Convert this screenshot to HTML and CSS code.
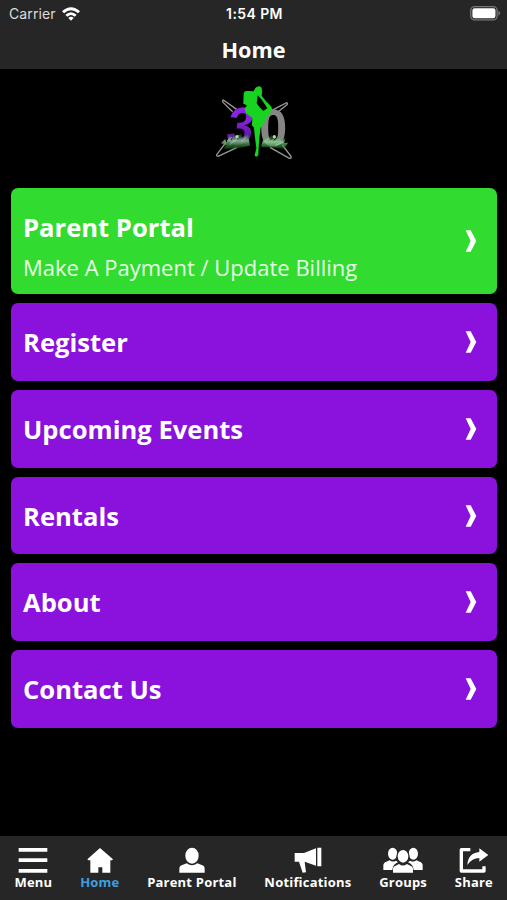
FILE: index.html
```
<!DOCTYPE html>
<html lang="en">
<head>
    <meta charset="UTF-8">
    <meta name="viewport" content="width=device-width, initial-scale=1.0">
    <title>Home</title>
    <link rel="stylesheet" href="styles.css">
</head>
<body>
    <header class="header">
        <div class="status-bar">
            <div class="carrier">
                <span>Carrier</span>
                <svg class="wifi" viewBox="0 0 54 42">
                    <path d="M0 13Q27 -11 54 13L48 19Q27 1 6 19Z"/>
                    <path d="M10 23Q27 8 44 23L38 29Q27 19 16 29Z"/>
                    <path d="M19 33Q27 26 35 33L27 41Z"/>
                </svg>
            </div>
            <span class="time">1:54 PM</span>
            <div class="power">
                <svg class="battery" viewBox="0 0 92 44">
                    <rect x="2" y="2" width="80" height="40" rx="12" fill="none" stroke="#777" stroke-width="4"/>
                    <rect x="7" y="7" width="70" height="30" rx="7" fill="#fff"/>
                    <path d="M86 15Q92 18 92 22T86 29Z" fill="#777"/>
                </svg>
            </div>
        </div>
        <h1 class="title">Home</h1>
    </header>

    <main class="content">
        <svg class="logo" viewBox="0 0 300 270">
            <defs>
                <linearGradient id="spray" x1="0" y1="0" x2="0" y2="1">
                    <stop offset="0" stop-color="#1c7a20" stop-opacity="0"/>
                    <stop offset=".55" stop-color="#8fd092" stop-opacity=".8"/>
                    <stop offset="1" stop-color="#0c6410" stop-opacity=".5"/>
                </linearGradient>
                <linearGradient id="three" x1="0" y1="0" x2="0" y2="1">
                    <stop offset=".4" stop-color="#8a22e2"/>
                    <stop offset=".9" stop-color="#3c1064"/>
                </linearGradient>
            </defs>
            <!-- crossed blades -->
            <g class="blades">
                <path d="M98 94L58 66Q53 68 58 74L86 101"/>
                <path d="M202 98L248 74Q253 76 248 81L214 108"/>
                <path d="M66 193L38 230Q37 236 44 234L98 209"/>
                <path d="M198 208L256 241Q263 242 261 235L235 201"/>
            </g>
            <text class="digit" x="93" y="197" textLength="80" lengthAdjust="spacingAndGlyphs" transform="skewX(-9)" fill="url(#three)">3</text>
            <text class="digit" x="166" y="203" textLength="84" lengthAdjust="spacingAndGlyphs" fill="#858585">0</text>
            <path d="M51 195L64 183L67 195L78 169L82 188L92 163L100 185L111 160L115 179L132 167L138 203Q94 214 58 212L66 203Z" fill="url(#spray)"/>
            <path d="M172 203L180 173L190 184L203 166L210 187L224 169L231 190L245 179L240 195L252 194L240 213Q205 207 172 207Z" fill="url(#spray)"/>
            <path d="M70 188L84 177M91 192L105 171M111 191L127 178M78 200L92 186M182 190L195 180M201 190L215 178M214 202L238 193" stroke="#b0dcb2" stroke-width="2"/>
            <circle cx="99" cy="176" r="5" fill="#a6dfa7"/>
            <circle cx="211" cy="176" r="5" fill="#a6dfa7"/>
            <!-- skater -->
            <path class="skater" fill-rule="evenodd" d="M119 48Q120 38 130 39L149 40L154 30Q163 22 171 27Q176 32 173 53L188 72Q209 89 203 99L186 121Q180 142 170 149L166 180L164 211L163 232L156 237L152 232L157 211L152 170L150 149L144 142L145 120L126 105L122 93L129 82L118 77ZM161 52L158 76L167 88L178 99L190 91L174 66Z"/>
        </svg>

        <nav class="cards">
            <a class="card featured" href="#">
                <div class="card-text">
                    <h2>Parent Portal</h2>
                    <p>Make A Payment / Update Billing</p>
                </div>
                <svg class="arrow" viewBox="0 0 34 66"><path d="M1 1H16L33 33L16 65H1L16 33Z"/></svg>
            </a>
            <a class="card" href="#">
                <h2>Register</h2>
                <svg class="arrow" viewBox="0 0 34 66"><path d="M1 1H16L33 33L16 65H1L16 33Z"/></svg>
            </a>
            <a class="card" href="#">
                <h2>Upcoming Events</h2>
                <svg class="arrow" viewBox="0 0 34 66"><path d="M1 1H16L33 33L16 65H1L16 33Z"/></svg>
            </a>
            <a class="card" href="#">
                <h2>Rentals</h2>
                <svg class="arrow" viewBox="0 0 34 66"><path d="M1 1H16L33 33L16 65H1L16 33Z"/></svg>
            </a>
            <a class="card" href="#">
                <h2>About</h2>
                <svg class="arrow" viewBox="0 0 34 66"><path d="M1 1H16L33 33L16 65H1L16 33Z"/></svg>
            </a>
            <a class="card" href="#">
                <h2>Contact Us</h2>
                <svg class="arrow" viewBox="0 0 34 66"><path d="M1 1H16L33 33L16 65H1L16 33Z"/></svg>
            </a>
        </nav>
    </main>

    <nav class="tabbar">
        <a class="tab" href="#">
            <svg class="icon" viewBox="0 0 120 78"><path d="M17 3H103V14H17ZM17 34H103V45H17ZM17 66H103V77H17Z"/></svg>
            <span>Menu</span>
        </a>
        <a class="tab active" href="#">
            <svg class="icon" viewBox="0 0 120 78"><path d="M60 3L99 37L96 40H91V77H67V61H55V77H31V40H25L22 37Z"/></svg>
            <span>Home</span>
        </a>
        <a class="tab" href="#">
            <svg class="icon" viewBox="0 0 120 78">
                <ellipse cx="60" cy="26" rx="20" ry="24"/>
                <path d="M22 77V65Q22 56 31 54L44 49Q60 61 76 49L89 54Q98 56 98 65V77Z"/>
            </svg>
            <span>Parent Portal</span>
        </a>
        <a class="tab" href="#">
            <svg class="icon" viewBox="0 0 120 78">
                <path d="M20 18H48L84 4V56L50 44L54 76L44 77L33 44H20ZM88 2H100V58H88Z"/>
            </svg>
            <span>Notifications</span>
        </a>
        <a class="tab" href="#">
            <svg class="icon" viewBox="0 0 120 78">
                <ellipse cx="29" cy="20" rx="14" ry="18"/>
                <ellipse cx="91" cy="20" rx="14" ry="18"/>
                <path d="M1 69V55Q1 47 10 44L20 40Q28 47 39 41L45 46Q29 52 28 69ZM119 69V55Q119 47 110 44L100 40Q92 47 81 41L75 46Q91 52 92 69Z"/>
                <ellipse class="front" cx="60" cy="28" rx="18" ry="21"/>
                <path d="M30 77V67Q30 58 38 56L48 51Q60 60 72 51L82 56Q90 58 90 67V77Z"/>
            </svg>
            <span>Groups</span>
        </a>
        <a class="tab" href="#">
            <svg class="icon" viewBox="0 0 120 78">
                <path d="M49 8H22V72H90V58" fill="none" stroke="#fff" stroke-width="10" stroke-linejoin="round"/>
                <path d="M76 4L103 24L76 44V33Q54 33 40 54Q42 18 76 15Z"/>
            </svg>
            <span>Share</span>
        </a>
    </nav>
</body>
</html>
```
FILE: styles.css
```
* {
    box-sizing: border-box;
}
body {
    margin: 0;
    height: 900px;
    display: flex;
    flex-direction: column;
    background: #000;
    color: #fff;
    font-family: "Open Sans", sans-serif;
    overflow: hidden;
}
a {
    color: inherit;
    text-decoration: none;
}
h1, h2, p {
    margin: 0;
}
.header {
    height: 69px;
    background: #262626;
}
.status-bar {
    display: grid;
    grid-template-columns: 1fr auto 1fr;
    align-items: center;
    height: 27px;
    padding: 0 7px 0 9px;
    font-family: Inter, sans-serif;
    font-size: 14px;
}
.carrier {
    display: flex;
    align-items: center;
    gap: 6px;
    color: #ddd;
    letter-spacing: 0.1px;
}
.wifi {
    width: 18px;
    height: 14px;
    fill: #fff;
}
.time {
    font-weight: 600;
    font-size: 14px;
    letter-spacing: 0.4px;
}
.power {
    display: flex;
    justify-content: flex-end;
}
.battery {
    width: 30.5px;
    height: 14.5px;
}
.title {
    font-size: 21.7px;
    line-height: 30px;
    margin-top: 8px;
    text-align: center;
}
.content {
    flex: 1;
    padding: 9px 10.5px 0 11px;
}
.logo {
    display: block;
    width: 100px;
    height: 90px;
    margin: 0 auto 20.4px;
}
.blades {
    fill: none;
    stroke: #999;
    stroke-width: 4;
}
.digit {
    font-family: "Liberation Sans", sans-serif;
    font-weight: 700;
    font-size: 158px;
}
.skater {
    fill: #19d321;
}
.cards {
    display: flex;
    flex-direction: column;
    gap: 9px;
}
.card {
    display: flex;
    align-items: center;
    justify-content: space-between;
    height: 77.7px;
    padding: 0 19.5px 0 12px;
    border-radius: 7px;
    background: #8b11dc;
}
.card h2 {
    padding-top: 2px;
    font-size: 25.6px;
    line-height: 36px;
}
.featured {
    height: 106px;
    background: #31db2f;
}
.featured .card-text {
    padding-top: 7px;
}
.featured p {
    font-size: 22px;
    line-height: 30px;
    margin-top: 6px;
    color: #e6fbe6;
}
.arrow {
    width: 12px;
    height: 22px;
    fill: #fff;
}
.tabbar {
    display: flex;
    justify-content: space-between;
    height: 64px;
    padding: 11px 14px 0 14.5px;
    background: #262626;
}
.tab {
    display: flex;
    flex-direction: column;
    align-items: center;
    font-size: 13px;
    font-weight: 700;
    line-height: 18px;
    letter-spacing: 0.2px;
}
.icon {
    width: 40px;
    height: 26px;
    margin: 0 -4px;
    fill: #fff;
}
.front {
    stroke: #262626;
    stroke-width: 4;
}
.active {
    color: #3da0e3;
}
```
